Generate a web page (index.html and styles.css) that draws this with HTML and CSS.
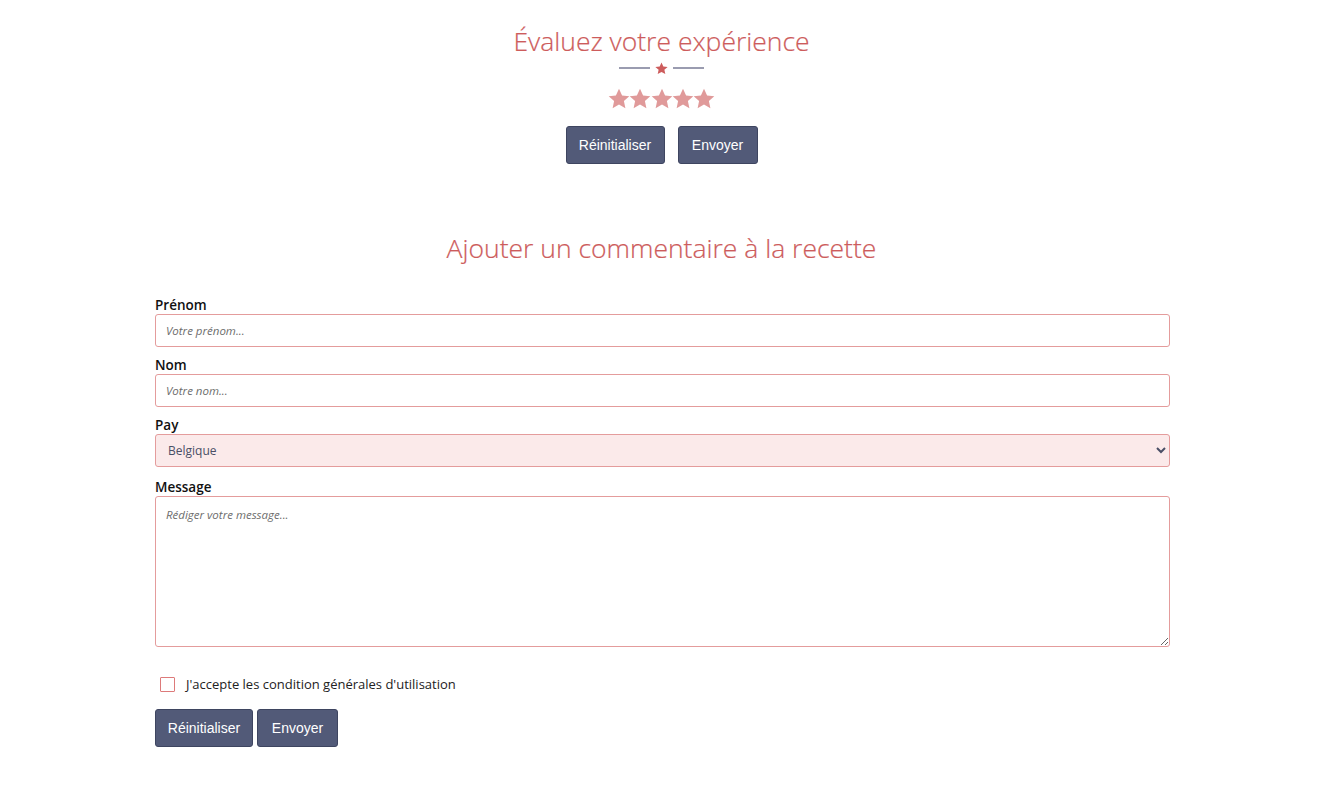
FILE: index.html
```html
<!DOCTYPE html>
<html lang="fr">
<head>
<meta charset="utf-8">
<title>Évaluez votre expérience</title>
<link rel="stylesheet" href="styles.css">
</head>
<body>
<section class="rating">
  <h2 class="title">Évaluez votre expérience</h2>
  <div class="divider">
    <span class="divider-line"></span>
    <svg class="divider-star" viewBox="0 0 24 24"><path d="M12 2.5l2.9 6.3 6.9.7-5.2 4.6 1.5 6.8L12 17.4l-6.1 3.5 1.5-6.8-5.2-4.6 6.9-.7z"/></svg>
    <span class="divider-line"></span>
  </div>
  <div class="stars">
    <svg class="star" viewBox="0 0 24 24"><path d="M12 1.8l3.1 6.6 7.2.8-5.4 4.9 1.5 7.1L12 17.6l-6.4 3.6 1.5-7.1-5.4-4.9 7.2-.8z"/></svg>
    <svg class="star" viewBox="0 0 24 24"><path d="M12 1.8l3.1 6.6 7.2.8-5.4 4.9 1.5 7.1L12 17.6l-6.4 3.6 1.5-7.1-5.4-4.9 7.2-.8z"/></svg>
    <svg class="star" viewBox="0 0 24 24"><path d="M12 1.8l3.1 6.6 7.2.8-5.4 4.9 1.5 7.1L12 17.6l-6.4 3.6 1.5-7.1-5.4-4.9 7.2-.8z"/></svg>
    <svg class="star" viewBox="0 0 24 24"><path d="M12 1.8l3.1 6.6 7.2.8-5.4 4.9 1.5 7.1L12 17.6l-6.4 3.6 1.5-7.1-5.4-4.9 7.2-.8z"/></svg>
    <svg class="star" viewBox="0 0 24 24"><path d="M12 1.8l3.1 6.6 7.2.8-5.4 4.9 1.5 7.1L12 17.6l-6.4 3.6 1.5-7.1-5.4-4.9 7.2-.8z"/></svg>
  </div>
  <div class="actions actions-center">
    <button class="btn btn-reset" type="button">Réinitialiser</button>
    <button class="btn btn-send" type="button">Envoyer</button>
  </div>
</section>

<section class="comment">
  <h2 class="title title-comment">Ajouter un commentaire à la recette</h2>
  <form class="form">
    <label class="label" for="prenom">Prénom</label>
    <input class="field" id="prenom" type="text" placeholder="Votre prénom...">
    <label class="label" for="nom">Nom</label>
    <input class="field" id="nom" type="text" placeholder="Votre nom...">
    <label class="label" for="pays">Pay</label>
    <select class="field field-select" id="pays">
      <option>Belgique</option>
    </select>
    <label class="label label-message" for="msg">Message</label>
    <textarea class="field field-area" id="msg" placeholder="Rédiger votre message..."></textarea>
    <label class="check">
      <span class="check-box"></span>
      <span class="check-text">J'accepte les condition générales d'utilisation</span>
    </label>
    <div class="actions">
      <button class="btn btn-reset-2" type="button">Réinitialiser</button>
      <button class="btn btn-send-2" type="button">Envoyer</button>
    </div>
  </form>
</section>
</body>
</html>
```

FILE: styles.css
```css
* { box-sizing: border-box; }

body {
  margin: 0;
  background: #ffffff;
  font-family: "Open Sans", "Noto Sans", sans-serif;
  color: #111;
}

.rating {
  display: flex;
  flex-direction: column;
  align-items: center;
  padding-top: 24px;
}

.title {
  margin: 0;
  font-family: "Open Sans", sans-serif;
  font-weight: 300;
  font-size: 26.5px;
  line-height: 34px;
  color: #cd5c5c;
  text-align: center;
  -webkit-text-stroke: 0.2px #cd5c5c;
}

.divider {
  display: flex;
  align-items: center;
  gap: 4px;
  height: 18px;
  margin-top: 1px;
}

.divider-line {
  width: 31px;
  height: 2px;
  background: #9a9cb0;
}

.divider-star {
  width: 15px;
  height: 15px;
  fill: #cd5c5c;
}

.stars {
  display: flex;
  margin-top: 10px;
}

.star {
  width: 24px;
  height: 24px;
  fill: #e09a9a;
  margin: 0 -1.4px;
}

.actions {
  display: flex;
  gap: 4px;
}

.actions-center {
  gap: 13px;
  margin-top: 15px;
}

.btn {
  height: 38px;
  padding: 0;
  background: #525a78;
  color: #ffffff;
  border: 1px solid #3e4560;
  border-radius: 3px;
  font-family: "Liberation Sans", Arial, sans-serif;
  font-size: 14px;
  text-align: center;
}

.btn-reset { width: 99px; }
.btn-send { width: 80px; }
.btn-reset-2 { width: 98px; }
.btn-send-2 { width: 81px; }

.comment {
  padding-top: 67px;
}

.title-comment {
  line-height: 34px;
}

.form {
  display: flex;
  flex-direction: column;
  width: 1015px;
  margin: 31px auto 0 155px;
}

.label {
  font-family: "Open Sans", sans-serif;
  font-weight: 600;
  font-size: 13.5px;
  line-height: 18px;
  color: #111;
}

.field {
  width: 100%;
  height: 33px;
  margin-bottom: 9px;
  padding: 0 10px;
  border: 1px solid #e49c9c;
  border-radius: 3px;
  background: #ffffff;
  font-family: "Open Sans", sans-serif;
  font-size: 11.5px;
  color: #333;
  outline: none;
}

.field::placeholder {
  color: #6d6d6d;
  font-style: italic;
}

.field-select {
  background: #fbeaea;
  color: #4a4f66;
  font-size: 12px;
  padding-left: 8px;
  margin-bottom: 11px;
}

.field-area {
  height: 151px;
  padding: 10px;
  resize: vertical;
  margin-bottom: 28px;
}

.check {
  display: flex;
  align-items: center;
  gap: 11px;
  padding-left: 5px;
  margin-bottom: 16px;
}

.check-box {
  width: 15px;
  height: 15px;
  border: 1.5px solid #dd7a7a;
  border-radius: 1px;
  background: #fff;
}

.check-text {
  font-family: "Open Sans", sans-serif;
  font-size: 13px;
  color: #222;
}
```
